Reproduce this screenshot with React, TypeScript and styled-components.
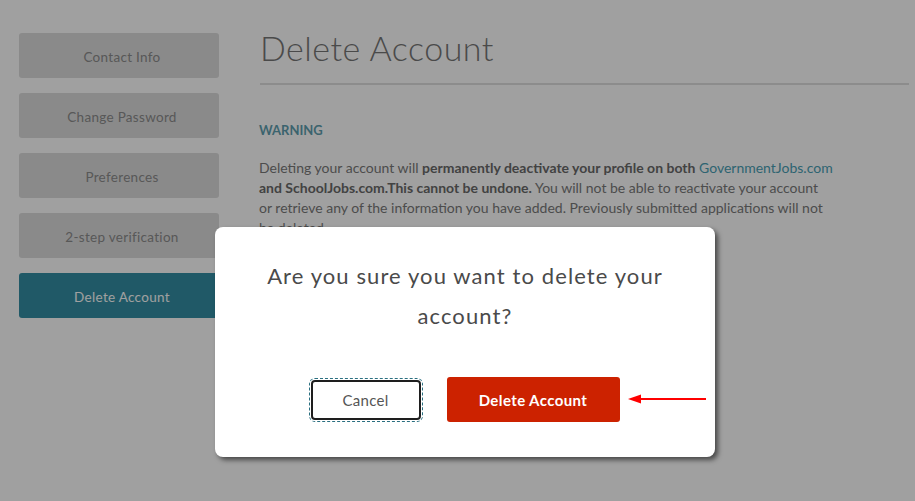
import React from "react";
import styled, { createGlobalStyle } from "styled-components";

const GlobalStyle = createGlobalStyle`
  html, body {
    margin: 0;
    padding: 0;
    background: #fff;
    font-family: Lato, "Open Sans", Arial, sans-serif;
  }
  * { box-sizing: border-box; }
`;

const Page = styled.div`
  position: relative;
  display: flex;
  gap: 40px;
  width: 915px;
  height: 501px;
  padding: 33px 6px 0 19px;
  overflow: hidden;
`;

const SideNav = styled.nav`
  display: flex;
  flex-direction: column;
  gap: 15px;
  width: 200px;
  flex-shrink: 0;
`;

const NavItem = styled.div<{ $active?: boolean }>`
  display: flex;
  align-items: center;
  justify-content: center;
  height: 45px;
  padding: 2px 0 0 6px;
  border-radius: 3px;
  font-size: 13.5px;
  letter-spacing: 0.3px;
  color: ${(p) => (p.$active ? "#fff" : "#8c8c8c")};
  background: ${(p) => (p.$active ? "#348fa5" : "#dcdcdc")};
`;

const Main = styled.main`
  flex: 1;
`;

const Heading = styled.h1`
  margin: 0 0 0 1px;
  font-size: 34px;
  font-weight: 300;
  letter-spacing: 0.5px;
  line-height: 30px;
  color: #777;
  padding-bottom: 20px;
  border-bottom: 2px solid #e0e0e0;
`;

const Warning = styled.h4`
  margin: 37px 0 0;
  font-size: 13px;
  font-weight: 700;
  color: #5f9fb0;
`;

const Body = styled.p`
  margin: 20px 0 0;
  width: 600px;
  font-size: 14px;
  line-height: 20px;
  color: #7a7a7a;
  b {
    color: #6a6a6a;
  }
`;

const Link = styled.span`
  color: #4a9fb5;
`;

const Overlay = styled.div`
  position: absolute;
  inset: 0;
  background: rgba(0, 0, 0, 0.373);
`;

const Modal = styled.div`
  position: absolute;
  left: 215px;
  top: 227px;
  width: 500px;
  height: 230px;
  padding: 29px 20px 0;
  border-radius: 8px;
  background: #fff;
  box-shadow: 3px 3px 5px rgba(0, 0, 0, 0.55);
  text-align: center;
`;

const Question = styled.div`
  font-size: 22px;
  letter-spacing: 1.1px;
  line-height: 40px;
  color: #4a4a4a;
`;

const Actions = styled.div`
  position: relative;
  display: flex;
  align-items: center;
  justify-content: center;
  gap: 26px;
  margin-top: 41px;
`;

const CancelButton = styled.button`
  width: 110px;
  height: 40px;
  border: 2px solid #1e1e1e;
  border-radius: 4px;
  background: #fff;
  font-family: inherit;
  font-size: 15px;
  letter-spacing: 0.3px;
  color: #555;
  outline: 1px dashed #2a6f80;
  outline-offset: 1px;
`;

const DangerButton = styled.button`
  width: 173px;
  height: 45px;
  border: none;
  border-radius: 3px;
  background: #cc2200;
  font-family: inherit;
  font-size: 15px;
  font-weight: 700;
  letter-spacing: 0.4px;
  color: #fff;
`;

const Arrow = styled.svg`
  position: absolute;
  left: 393px;
  top: 16px;
`;

export default function App() {
  return (
    <>
      <GlobalStyle />
      <Page>
        <SideNav>
          <NavItem>Contact Info</NavItem>
          <NavItem>Change Password</NavItem>
          <NavItem>Preferences</NavItem>
          <NavItem>2-step verification</NavItem>
          <NavItem $active>Delete Account</NavItem>
        </SideNav>
        <Main>
          <Heading>Delete Account</Heading>
          <Warning>WARNING</Warning>
          <Body>
            Deleting your account will{" "}
            <b>permanently deactivate your profile on both</b>{" "}
            <Link>GovernmentJobs.com</Link>
            <br />
            <b>and SchoolJobs.com.This cannot be undone.</b> You will not be
            able to reactivate your account
            <br />
            or retrieve any of the information you have added. Previously
            submitted applications will not
            <br />
            be deleted.
          </Body>
        </Main>
        <Overlay />
        <Modal>
          <Question>
            Are you sure you want to delete your
            <br />
            account?
          </Question>
          <Actions>
            <CancelButton>Cancel</CancelButton>
            <DangerButton>Delete Account</DangerButton>
            <Arrow width="80" height="12" viewBox="0 0 80 12">
              <path d="M12 6 H78" stroke="#f00" strokeWidth="2" />
              <path d="M0 6 L13 1.5 L13 10.5 Z" fill="#f00" />
            </Arrow>
          </Actions>
        </Modal>
      </Page>
    </>
  );
}
